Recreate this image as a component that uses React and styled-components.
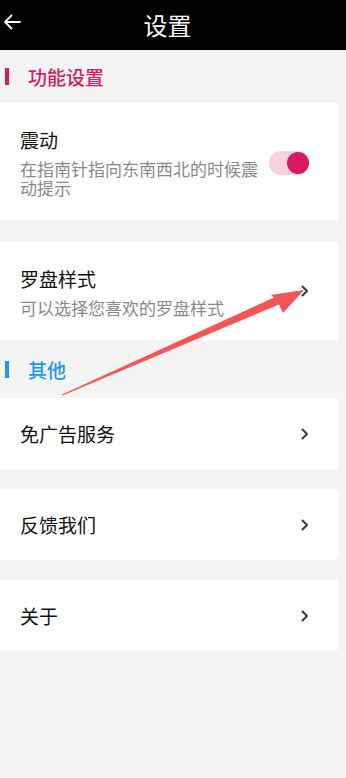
import React from "react";
import styled, { createGlobalStyle } from "styled-components";

const Global = createGlobalStyle`
  html, body { margin: 0; padding: 0; background: #f4f4f4; }
  body { font-family: "Noto Sans CJK SC", "Noto Sans", sans-serif; }
  * { box-sizing: border-box; }
`;

const Page = styled.div`
  position: relative;
  width: 346px;
  min-height: 778px;
  background: #f4f4f4;
  overflow: hidden;
`;

const Header = styled.div`
  height: 50px;
  background: #000;
  display: flex;
  align-items: center;
  justify-content: center;
  position: relative;
  color: #fff;
  font-size: 24px;
  line-height: 1;
  padding-right: 11px;
`;

const BackButton = styled.div`
  position: absolute;
  left: 3px;
  top: 14px;
  width: 18px;
  height: 16px;
  display: flex;
`;

const SectionTitle = styled.div`
  height: ${(p) => p.h}px;
  display: flex;
  align-items: center;
  padding-left: 5px;
  gap: 19px;
  color: ${(p) => p.color};
  font-size: 19px;
  font-weight: 500;
  line-height: 1;
  &::before {
    content: "";
    width: 4px;
    height: 17px;
    background: ${(p) => p.color};
  }
`;

const Card = styled.div`
  width: 339px;
  background: #fff;
  border-radius: 0 5px 5px 0;
  display: flex;
  align-items: center;
  gap: 8px;
  padding: ${(p) => (p.sub ? "23px 30px 23px 20px" : "0 30px 0 20px")};
  min-height: ${(p) => (p.sub ? 0 : 71)}px;
  margin-top: ${(p) => p.mt || 0}px;
`;

const TextCol = styled.div`
  flex: 1;
  display: flex;
  flex-direction: column;
  gap: 5px;
`;

const Title = styled.div`
  font-size: 19px;
  line-height: 28px;
  color: #111;
`;

const Sub = styled.div`
  font-size: 17px;
  line-height: 19px;
  color: #8a8a8a;
`;

const Track = styled.div`
  position: relative;
  width: 40px;
  height: 24px;
  border-radius: 12px;
  background: #f6d2df;
  flex-shrink: 0;
  margin-top: 2px;
`;

const Knob = styled.div`
  position: absolute;
  right: 0;
  top: 1px;
  width: 22px;
  height: 22px;
  border-radius: 50%;
  background: #d81b60;
`;

const Chevron = styled.svg`
  width: 8px;
  height: 12px;
  flex-shrink: 0;
`;

const Overlay = styled.svg`
  position: absolute;
  left: 0;
  top: 0;
  width: 346px;
  height: 778px;
  pointer-events: none;
`;

const Arrow = () => (
  <Chevron viewBox="0 0 8 12">
    <path d="M1.5 1.5 L6 6 L1.5 10.5" fill="none" stroke="#3a3a3a" strokeWidth="2" strokeLinecap="round" strokeLinejoin="round" />
  </Chevron>
);

export default function App() {
  return (
    <Page>
      <Global />
      <Header>
        <BackButton>
          <svg width="18" height="16" viewBox="0 0 18 16">
            <path d="M17 8 H2 M8.5 1.5 L2 8 L8.5 14.5" fill="none" stroke="#fff" strokeWidth="1.8" strokeLinecap="round" strokeLinejoin="round" />
          </svg>
        </BackButton>
        设置
      </Header>
      <SectionTitle h={53} color="#d81b60">功能设置</SectionTitle>
      <Card sub>
        <TextCol>
          <Title>震动</Title>
          <Sub>在指南针指向东南西北的时候震动提示</Sub>
        </TextCol>
        <Track>
          <Knob />
        </Track>
      </Card>
      <Card sub mt={22}>
        <TextCol>
          <Title>罗盘样式</Title>
          <Sub>可以选择您喜欢的罗盘样式</Sub>
        </TextCol>
        <Arrow />
      </Card>
      <SectionTitle h={58} color="#2196f3">其他</SectionTitle>
      <Card>
        <TextCol>
          <Title>免广告服务</Title>
        </TextCol>
        <Arrow />
      </Card>
      <Card mt={20}>
        <TextCol>
          <Title>反馈我们</Title>
        </TextCol>
        <Arrow />
      </Card>
      <Card mt={20}>
        <TextCol>
          <Title>关于</Title>
        </TextCol>
        <Arrow />
      </Card>
      <Overlay viewBox="0 0 346 778">
        <polygon
          points="62,394.5 274,297.5 271,295 304,290 283,313 279,304.5 62.5,395.5"
          fill="#f65555"
        />
      </Overlay>
    </Page>
  );
}
